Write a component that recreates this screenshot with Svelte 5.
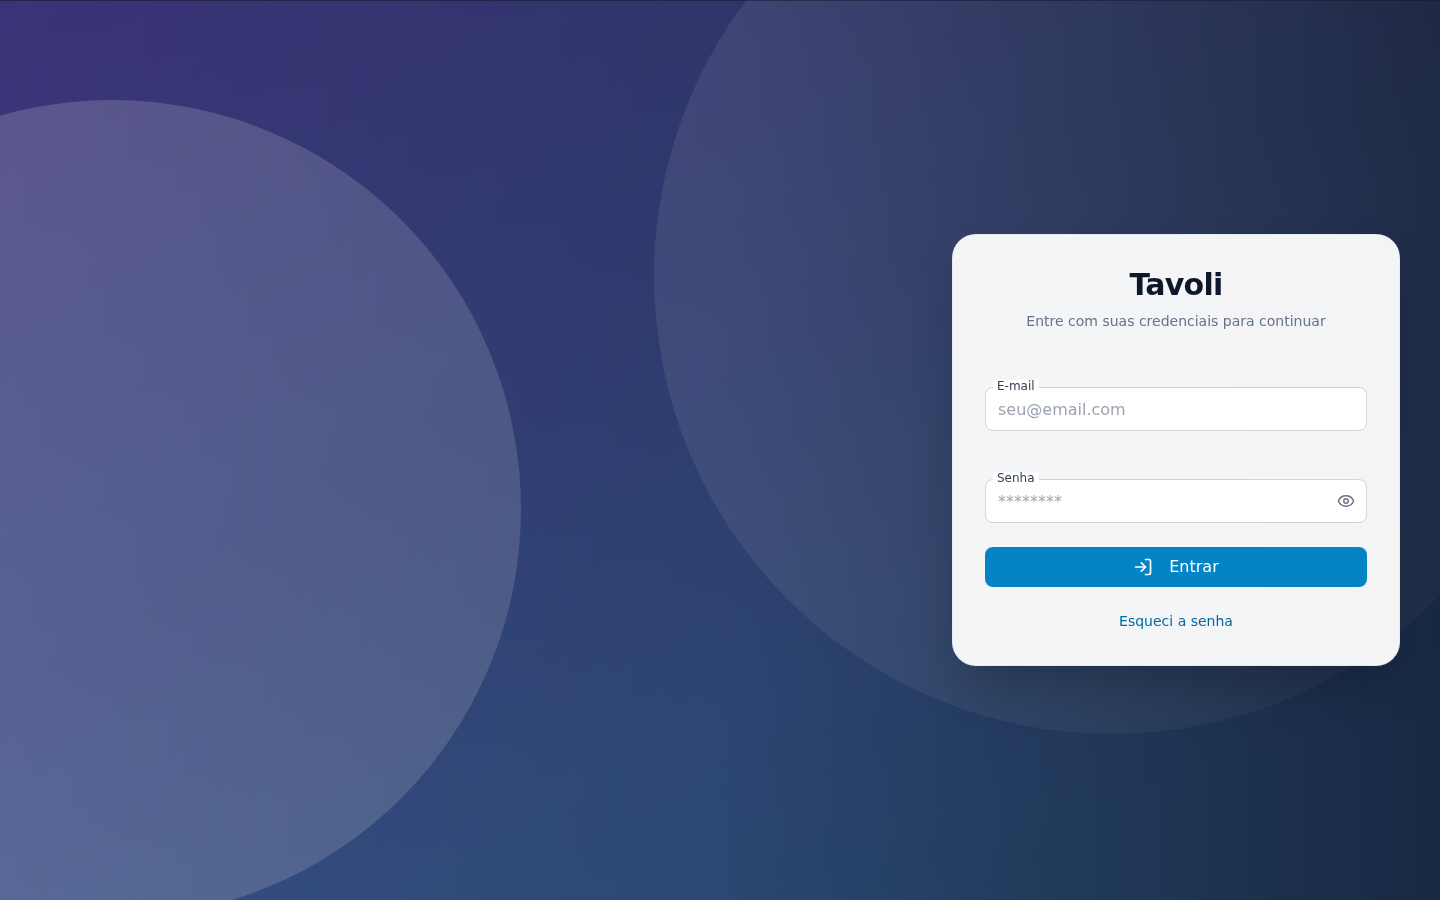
<script>
  let email = $state('');
  let password = $state('');
  let visible = $state(false);
</script>

<main class="page">
  <svg class="backdrop" viewBox="0 0 1440 900" preserveAspectRatio="xMidYMid slice" aria-hidden="true">
    <defs>
      <linearGradient id="base" gradientUnits="userSpaceOnUse" x1="0" y1="0" x2="620" y2="1120">
        <stop offset="0" stop-color="#3b3377" />
        <stop offset="0.5" stop-color="#36447f" />
        <stop offset="0.75" stop-color="#355185" />
        <stop offset="1" stop-color="#2f5682" />
      </linearGradient>
      <linearGradient id="shade" x1="0" y1="0" x2="1" y2="0">
        <stop offset="0" stop-color="#0f172a" stop-opacity="0" />
        <stop offset="0.5" stop-color="#0f172a" stop-opacity="0.2" />
        <stop offset="1" stop-color="#0f172a" stop-opacity="0.72" />
      </linearGradient>
    </defs>
    <rect width="1440" height="900" fill="url(#base)" />
    <circle cx="112" cy="509" r="409" fill="#fff" fill-opacity="0.17" />
    <circle cx="1112" cy="276" r="458" fill="#fff" fill-opacity="0.1" />
    <rect width="1440" height="900" fill="url(#shade)" />
    <rect width="1440" height="1" fill="#0f172a" fill-opacity="0.5" />
  </svg>

  <section class="card">
    <h1>Tavoli</h1>
    <p class="subtitle">Entre com suas credenciais para continuar</p>

    <form onsubmit={(e) => e.preventDefault()}>
      <div class="field">
        <label for="email">E-mail</label>
        <input id="email" type="email" placeholder="seu@email.com" bind:value={email} />
      </div>

      <div class="field">
        <label for="password">Senha</label>
        <input
          id="password"
          class="with-toggle"
          type={visible ? 'text' : 'password'}
          placeholder="********"
          bind:value={password}
        />
        <button class="toggle" type="button" aria-label="Mostrar senha" onclick={() => (visible = !visible)}>
          <svg width="18" height="18" viewBox="0 0 24 24" fill="none" stroke="currentColor" stroke-width="2" stroke-linecap="round" stroke-linejoin="round">
            <path d="M2.062 12.348a1 1 0 0 1 0-.696 10.75 10.75 0 0 1 19.876 0 1 1 0 0 1 0 .696 10.75 10.75 0 0 1-19.876 0" />
            <circle cx="12" cy="12" r="3" />
          </svg>
        </button>
      </div>

      <button class="submit" type="submit">
        <svg width="20" height="20" viewBox="0 0 24 24" fill="none" stroke="currentColor" stroke-width="2" stroke-linecap="round" stroke-linejoin="round">
          <path d="M15 3h4a2 2 0 0 1 2 2v14a2 2 0 0 1-2 2h-4" />
          <path d="m10 17 5-5-5-5" />
          <path d="M15 12H3" />
        </svg>
        <span>Entrar</span>
      </button>
    </form>

    <a class="forgot" href="#recuperar">Esqueci a senha</a>
  </section>
</main>

<style>
  :global(body) {
    margin: 0;
  }

  .page,
  .page * {
    box-sizing: border-box;
  }

  .page {
    position: relative;
    display: flex;
    align-items: center;
    justify-content: flex-end;
    min-height: 100vh;
    padding: 40px;
    overflow: hidden;
    background: #1e293b;
    font-family: 'DejaVu Sans', sans-serif;
    font-size: 16px;
    line-height: 24px;
  }

  .backdrop {
    position: absolute;
    inset: 0;
    width: 100%;
    height: 100%;
  }

  .card {
    position: relative;
    display: flex;
    flex-direction: column;
    width: 100%;
    max-width: 448px;
    padding: 32px;
    border: 1px solid rgba(226, 232, 240, 0.8);
    border-radius: 24px;
    background: rgba(255, 255, 255, 0.95);
    box-shadow: 0 25px 50px -12px rgba(0, 0, 0, 0.25);
    backdrop-filter: blur(8px);
    text-align: center;
  }

  h1 {
    margin: 0;
    color: #0f172a;
    font-size: 30px;
    font-weight: 700;
    letter-spacing: -0.025em;
    line-height: 36px;
  }

  .subtitle {
    margin: 8px 0 0;
    color: #64748b;
    font-size: 14px;
    line-height: 20px;
  }

  form {
    display: flex;
    flex-direction: column;
    margin-top: 56px;
  }

  .field {
    position: relative;
    display: flex;
    margin-bottom: 48px;
  }

  .field:nth-of-type(2) {
    margin-bottom: 24px;
  }

  label {
    position: absolute;
    top: -7px;
    left: 8px;
    padding: 0 4px;
    background: #fff;
    color: #374151;
    font-size: 12px;
    line-height: 12px;
  }

  input {
    width: 100%;
    height: 44px;
    padding: 0 12px;
    border: 1px solid #d1d5db;
    border-radius: 8px;
    background: #fff;
    color: #111827;
    font: inherit;
  }

  .with-toggle {
    padding-right: 40px;
  }

  input::placeholder {
    color: #9ca3af;
    opacity: 1;
  }

  button {
    border: 0;
    font: inherit;
    cursor: pointer;
  }

  .toggle {
    position: absolute;
    top: 0;
    right: 0;
    display: flex;
    align-items: center;
    height: 100%;
    padding: 0 12px;
    background: none;
    color: #6b7280;
  }

  .submit {
    display: flex;
    align-items: center;
    justify-content: center;
    gap: 16px;
    height: 40px;
    border-radius: 8px;
    background: #0284c7;
    color: #fff;
  }

  .forgot {
    align-self: center;
    margin-top: 22px;
    color: #0369a1;
    font-size: 14px;
    text-decoration: none;
  }
</style>
